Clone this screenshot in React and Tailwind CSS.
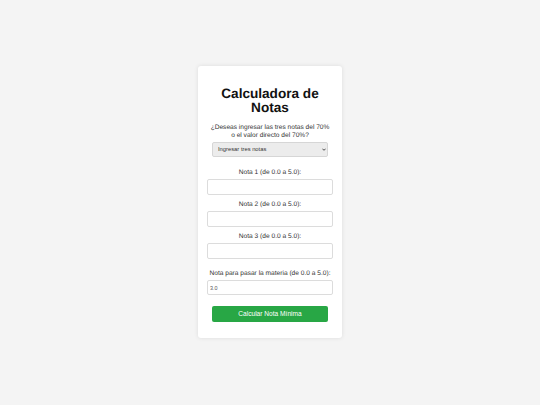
import { useState } from 'react'

function Field({ label, value, onChange, className = '' }) {
  return (
    <div className={className}>
      <label className="block whitespace-nowrap pt-[1.2px] text-center text-[6.6px] leading-[8px] text-[#333]">{label}</label>
      <input
        type="text"
        value={value}
        onChange={(e) => onChange(e.target.value)}
        className="mt-[2px] block h-[15.5px] w-full rounded-[2px] border border-[#dcdcdc] bg-white px-[2px] text-[5.4px] text-[#555] outline-none"
      />
    </div>
  )
}

export default function App() {
  const [mode, setMode] = useState('tres')
  const [notas, setNotas] = useState({ n1: '', n2: '', n3: '' })
  const [pasar, setPasar] = useState('3.0')

  function update(key, v) {
    setNotas((prev) => ({ ...prev, [key]: v }))
  }

  return (
    <div className="flex min-h-[405px] justify-center bg-[#f4f4f4] pt-[66px] font-['Liberation_Sans',Arial,sans-serif] [text-rendering:geometricPrecision]">
      <div className="h-fit w-[144px] rounded-[3px] bg-white px-[9px] pb-[16.4px] pt-[21px] shadow-[0_0_4px_rgba(0,0,0,0.1)]">
        <h1 className="whitespace-nowrap text-center text-[13.6px] font-bold leading-[14px] text-[#111]">
          Calculadora de
          <br />
          Notas
        </h1>

        <p className="mt-[8.7px] whitespace-nowrap text-center text-[6.6px] leading-[8px] text-[#333]">
          ¿Deseas ingresar las tres notas del 70%
          <br />
          o el valor directo del 70%?
        </p>

        <div className="relative mx-auto mt-[2.3px] w-[116px]">
          <select
            value={mode}
            onChange={(e) => setMode(e.target.value)}
            className="block h-[15.5px] w-full appearance-none rounded-[2px] border border-[#d6d6d6] bg-[#ececec] pl-[5px] text-[5.8px] text-[#333] outline-none"
          >
            <option value="tres">Ingresar tres notas</option>
            <option value="directo">Ingresar valor directo</option>
          </select>
          <svg viewBox="0 0 10 6" className="pointer-events-none absolute right-[2.5px] top-[6.2px] h-[3px] w-[4px]">
            <path d="M1 1 L5 5 L9 1" fill="none" stroke="#222" strokeWidth="2" />
          </svg>
        </div>

        <Field className="mt-[10.8px]" label="Nota 1 (de 0.0 a 5.0):" value={notas.n1} onChange={(v) => update('n1', v)} />
        <Field className="mt-[5px]" label="Nota 2 (de 0.0 a 5.0):" value={notas.n2} onChange={(v) => update('n2', v)} />
        <Field className="mt-[5.5px]" label="Nota 3 (de 0.0 a 5.0):" value={notas.n3} onChange={(v) => update('n3', v)} />
        <Field className="mt-[9.8px]" label="Nota para pasar la materia (de 0.0 a 5.0):" value={pasar} onChange={setPasar} />

        <button
          type="button"
          className="mx-auto mt-[10.3px] block h-[16px] w-[116px] rounded-[2px] bg-[#28a745] text-[6.6px] text-white"
        >
          Calcular Nota Mínima
        </button>
      </div>
    </div>
  )
}
